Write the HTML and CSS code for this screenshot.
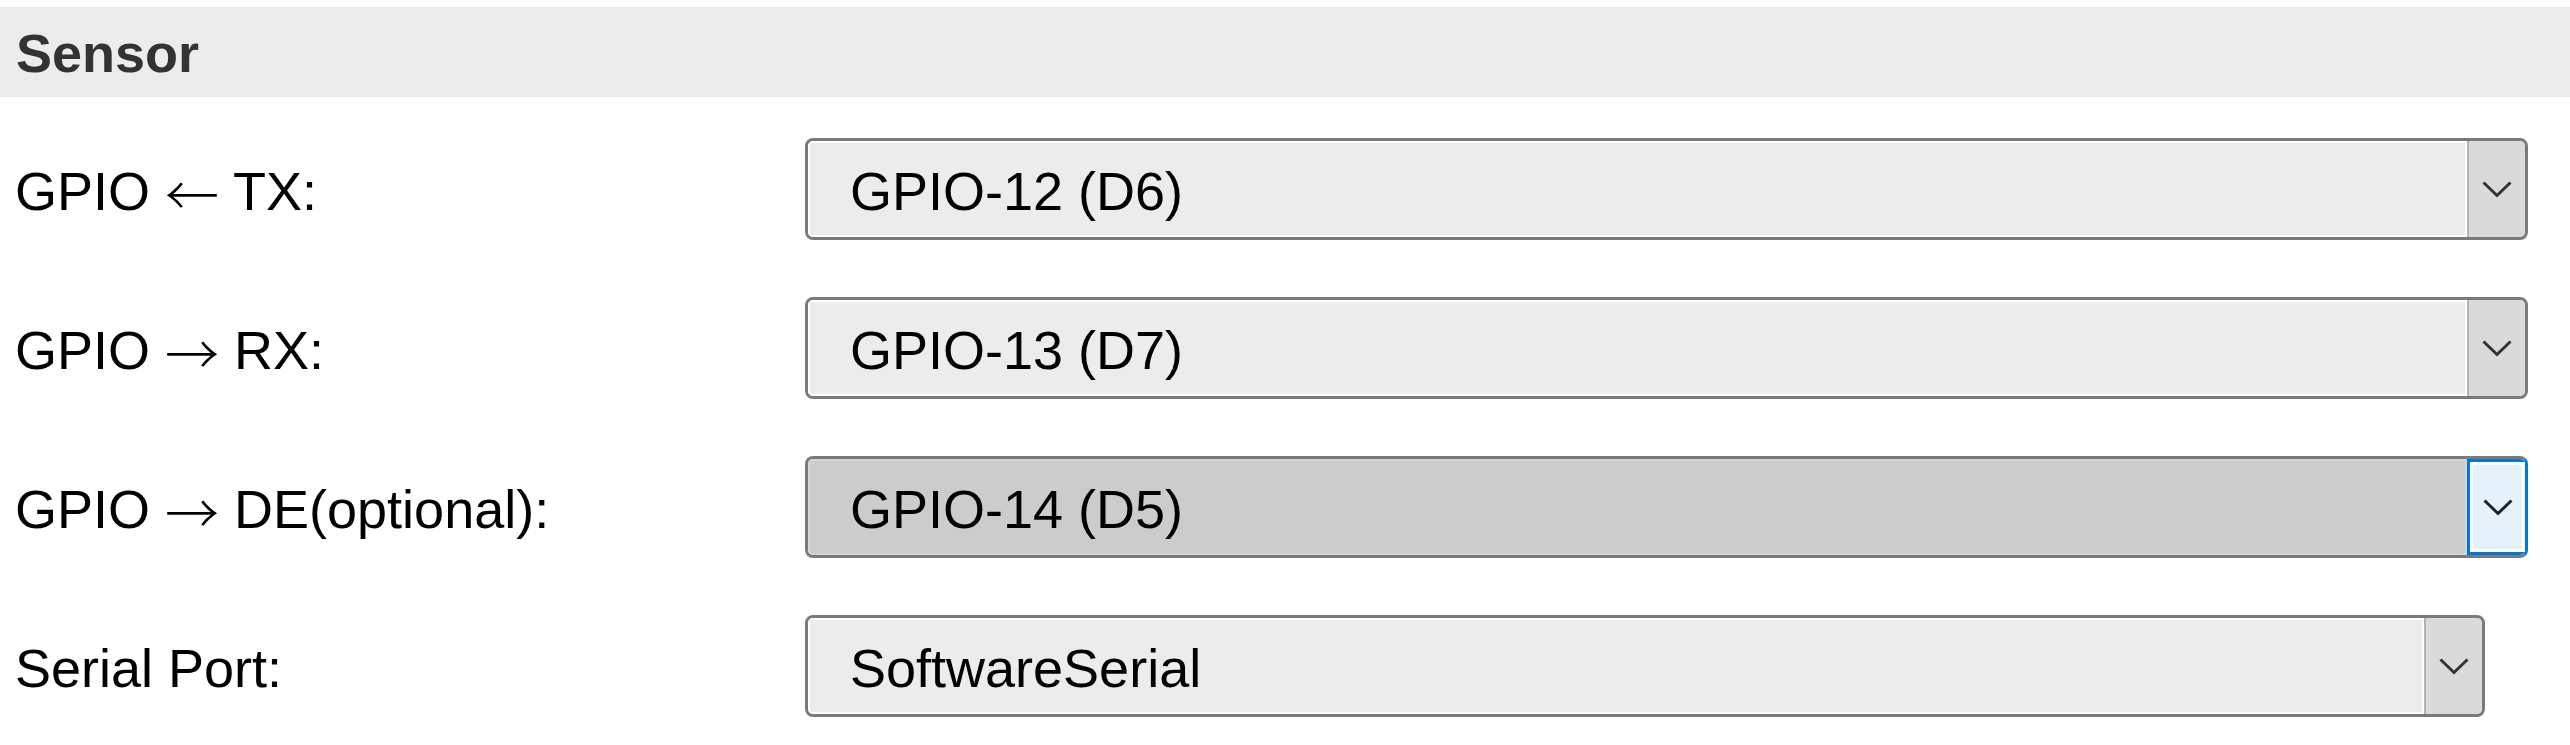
FILE: index.html
```html
<!DOCTYPE html>
<html lang="en">
<head>
    <meta charset="UTF-8">
    <title>Sensor</title>
    <link rel="stylesheet" href="styles.css">
</head>
<body>
    <div class="section-head">Sensor</div>
    <div class="form">
        <div class="row">
            <div class="label">GPIO <span class="arrow">←</span> TX:</div>
            <div class="select wide">
                <div class="value">GPIO-12 (D6)</div>
                <div class="btn"><svg width="30" height="17" viewBox="0 0 30 17"><polyline points="1.5,1.5 15,14.5 28.5,1.5" fill="none" stroke="#333" stroke-width="3"/></svg></div>
            </div>
        </div>
        <div class="row">
            <div class="label">GPIO <span class="arrow">→</span> RX:</div>
            <div class="select wide">
                <div class="value">GPIO-13 (D7)</div>
                <div class="btn"><svg width="30" height="17" viewBox="0 0 30 17"><polyline points="1.5,1.5 15,14.5 28.5,1.5" fill="none" stroke="#333" stroke-width="3"/></svg></div>
            </div>
        </div>
        <div class="row">
            <div class="label">GPIO <span class="arrow">→</span> DE(optional):</div>
            <div class="select wide hover">
                <div class="value">GPIO-14 (D5)</div>
                <div class="btn"><svg width="30" height="17" viewBox="0 0 30 17"><polyline points="1.5,1.5 15,14.5 28.5,1.5" fill="none" stroke="#222" stroke-width="3"/></svg></div>
            </div>
        </div>
        <div class="row">
            <div class="label">Serial Port:</div>
            <div class="select narrow">
                <div class="value">SoftwareSerial</div>
                <div class="btn"><svg width="30" height="17" viewBox="0 0 30 17"><polyline points="1.5,1.5 15,14.5 28.5,1.5" fill="none" stroke="#333" stroke-width="3"/></svg></div>
            </div>
        </div>
    </div>
</body>
</html>
```

FILE: styles.css
```css
body {
    margin: 0;
    font-family: "Liberation Sans", Arial, sans-serif;
    font-size: 54px;
    background-color: #fff;
    color: #000;
}
.section-head {
    margin-top: 7px;
    height: 90px;
    box-sizing: border-box;
    padding: 2px 0 0 16px;
    line-height: 88px;
    background-color: #ececec;
    color: #333;
    font-weight: bold;
}
.form {
    display: flex;
    flex-direction: column;
    gap: 57px;
    padding-top: 41px;
}
.row {
    display: flex;
    align-items: center;
}
.label {
    width: 805px;
    box-sizing: border-box;
    padding: 4px 0 0 15px;
    line-height: 62px;
}
.arrow {
    font-family: "Noto Sans CJK SC", "DejaVu Sans", sans-serif;
    font-weight: 300;
    vertical-align: -6px;
    line-height: 1;
}
.select {
    display: flex;
    height: 102px;
    box-sizing: border-box;
    border: 3px solid #7a7a7a;
    border-radius: 8px;
    background-color: #ececec;
    overflow: hidden;
}
.wide { width: 1723px; }
.narrow { width: 1680px; }
.value {
    flex: 1;
    display: flex;
    align-items: center;
    padding: 4px 0 0 42px;
    box-shadow: inset 0 0 0 2px #fff;
}
.btn {
    width: 56px;
    display: flex;
    align-items: center;
    justify-content: center;
    border-left: 2px solid #b2b2b2;
    background-color: #dadada;
}
.hover { border-right-color: #0078d7; }
.hover .value { background-color: #cccccc; box-shadow: inset 0 0 0 2px #d6d6d6; }
.hover .btn {
    border: 3px solid #0078d7;
    border-right: none;
    width: 55px;
    background-color: #e5f1fb;
    box-shadow: inset 3px 3px 0 #fff, inset 0 -3px 0 #fff, inset -3px 0 0 #fff;
}
```
